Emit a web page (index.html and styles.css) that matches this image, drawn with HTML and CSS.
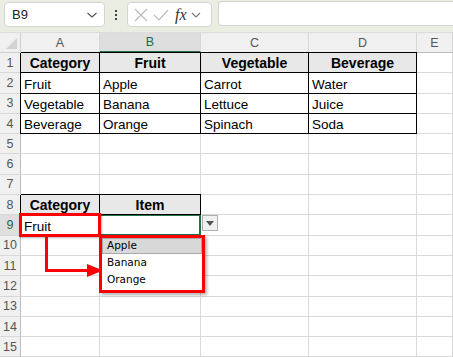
FILE: index.html
```html
<!DOCTYPE html>
<html>
<head>
<meta charset="utf-8">
<link rel="stylesheet" href="styles.css">
</head>
<body>
<div class="app">
  <div class="toolbar">
    <div class="namebox"><span class="ref">B9</span>
      <svg class="chev" width="12" height="8" viewBox="0 0 12 8"><path d="M1.5 2 L6 6 L10.5 2" fill="none" stroke="#555" stroke-width="1.2"/></svg>
    </div>
    <div class="dots"><i></i><i></i><i></i></div>
    <div class="fxbox">
      <svg width="16" height="16" viewBox="0 0 16 16"><path d="M2 2 L14 14 M14 2 L2 14" stroke="#bbb" stroke-width="1.2" fill="none"/></svg>
      <svg width="18" height="16" viewBox="0 0 18 16"><path d="M2 8 L7 13 L16 3" stroke="#bbb" stroke-width="1.2" fill="none"/></svg>
      <span class="fx">fx</span>
      <svg width="10" height="8" viewBox="0 0 10 8"><path d="M1 2 L5 6 L9 2" fill="none" stroke="#777" stroke-width="1.1"/></svg>
    </div>
    <div class="formula"></div>
  </div>
  <div class="sheet">
    <div class="grid">
      <div class="corner"></div><div class="ch">A</div><div class="ch sel">B</div><div class="ch">C</div><div class="ch">D</div><div class="ch">E</div>

      <div class="rh">1</div><div class="c t th">Category</div><div class="c t th">Fruit</div><div class="c t th">Vegetable</div><div class="c t th">Beverage</div><div class="c"></div>
      <div class="rh">2</div><div class="c t">Fruit</div><div class="c t">Apple</div><div class="c t">Carrot</div><div class="c t">Water</div><div class="c"></div>
      <div class="rh">3</div><div class="c t">Vegetable</div><div class="c t">Banana</div><div class="c t">Lettuce</div><div class="c t">Juice</div><div class="c"></div>
      <div class="rh">4</div><div class="c t">Beverage</div><div class="c t">Orange</div><div class="c t">Spinach</div><div class="c t">Soda</div><div class="c"></div>
      <div class="rh">5</div><div class="c"></div><div class="c"></div><div class="c"></div><div class="c"></div><div class="c"></div>
      <div class="rh">6</div><div class="c"></div><div class="c"></div><div class="c"></div><div class="c"></div><div class="c"></div>
      <div class="rh">7</div><div class="c"></div><div class="c"></div><div class="c"></div><div class="c"></div><div class="c"></div>
      <div class="rh">8</div><div class="c t th">Category</div><div class="c t th">Item</div><div class="c"></div><div class="c"></div><div class="c"></div>
      <div class="rh selr">9</div><div class="c t">Fruit</div><div class="c t active"></div><div class="c"></div><div class="c"></div><div class="c"></div>
      <div class="rh">10</div><div class="c"></div><div class="c"></div><div class="c"></div><div class="c"></div><div class="c"></div>
      <div class="rh">11</div><div class="c"></div><div class="c"></div><div class="c"></div><div class="c"></div><div class="c"></div>
      <div class="rh">12</div><div class="c"></div><div class="c"></div><div class="c"></div><div class="c"></div><div class="c"></div>
      <div class="rh">13</div><div class="c"></div><div class="c"></div><div class="c"></div><div class="c"></div><div class="c"></div>
      <div class="rh">14</div><div class="c"></div><div class="c"></div><div class="c"></div><div class="c"></div><div class="c"></div>
      <div class="rh">15</div><div class="c"></div><div class="c"></div><div class="c"></div><div class="c"></div><div class="c"></div>
    </div>

    <div class="ddbtn"><svg width="8" height="5" viewBox="0 0 8 5"><path d="M0 0 H8 L4 5 Z" fill="#555"/></svg></div>
    <div class="redbox"></div>
    <svg class="arrow" width="70" height="48" viewBox="0 0 70 48">
      <path d="M9.5 0 V34.5 H52" fill="none" stroke="#f00" stroke-width="3"/>
      <path d="M50 28 L66 34.5 L50 41 Z" fill="#f00"/>
    </svg>
    <div class="list">
      <div class="item hi">Apple</div>
      <div class="item">Banana</div>
      <div class="item">Orange</div>
    </div>
  </div>
</div>
</body>
</html>
```

FILE: styles.css
```css
* { box-sizing: border-box; }
html, body { margin: 0; padding: 0; background: #fff; }
body { width: 453px; height: 357px; overflow: hidden; font-family: "Liberation Sans", Arial, sans-serif; }
.app { width: 453px; height: 357px; overflow: hidden; }

.toolbar {
  height: 33px;
  background: #e9ede2;
  display: flex;
  align-items: flex-start;
  padding: 2px 0 0 4px;
  border-bottom: 1px solid #dcdcdc;
}
.namebox {
  width: 101px; height: 25px;
  background: #fff;
  border: 1px solid #d4d4d4;
  border-radius: 4px;
  display: flex; align-items: center; justify-content: space-between;
  padding: 0 6px 0 7px;
  font-size: 13px; color: #222;
}
.dots { width: 22px; height: 25px; display: flex; flex-direction: column; align-items: center; justify-content: center; gap: 2px; }
.dots i { display: block; width: 2px; height: 2px; background: #444; }
.fxbox {
  width: 85px; height: 25px;
  background: #fff;
  border: 1px solid #d4d4d4;
  border-radius: 4px;
  display: flex; align-items: center;
  padding: 0 3px 0 5px;
  gap: 3px;
}
.fx { font-family: "Liberation Serif", "DejaVu Serif", serif; font-style: italic; font-size: 16px; color: #333; margin-left: 2px; margin-right: 1px; }
.formula {
  margin-left: 6px;
  flex: 1; height: 25px;
  margin-top: -1px;
  background: #fff;
  border: 1px solid #d4d4d4;
  border-right: none;
  border-radius: 4px 0 0 4px;
}

.sheet { position: relative; }
.grid {
  display: grid;
  grid-template-columns: 21px 79px 101px 108px 108px 36px;
  grid-template-rows: 20px repeat(15, 20.3px);
  font-size: 13.5px;
}
.corner {
  background: #f0f0f0;
  border-right: 1px solid #cfcfcf;
  border-bottom: 1px solid #cfcfcf;
  position: relative;
}
.corner::after {
  content: ""; position: absolute; right: 3px; bottom: 3px;
  width: 0; height: 0;
  border-left: 11px solid transparent;
  border-bottom: 11px solid #d2d2d2;
}
.ch {
  background: #f0f0f0;
  border-right: 1px solid #d8d8d8;
  border-bottom: 1px solid #bdbdbd;
  color: #555;
  font-size: 12.5px;
  display: flex; align-items: center; justify-content: center;
}
.ch.sel { background: #dedede; color: #1d6a3f; border-bottom: 2px solid #217346; }
.rh {
  background: #f0f0f0;
  border-right: 1px solid #bdbdbd;
  border-bottom: 1px solid #d8d8d8;
  color: #555;
  font-size: 12.5px;
  display: flex; align-items: center; justify-content: center;
}
.rh.selr { color: #1d6a3f; background: #dedede; }
.c {
  border-right: 1px solid #d9d9d9;
  border-bottom: 1px solid #d9d9d9;
  display: flex; align-items: flex-end;
  padding: 0 3px 1px 3px;
  color: #000;
  white-space: nowrap;
  overflow: visible;
}
.c.t {
  border-right-color: #000;
  border-bottom-color: #000;
  box-shadow: -1px 0 0 #000, 0 -1px 0 #000;
}
.c.th { background: #e8e8e8; font-weight: bold; justify-content: center; font-size: 14px; }
.c.active { box-shadow: -1px 0 0 #000, 0 -1px 0 #000, inset 0 0 0 1px #217346; border-color: #217346; }

.ddbtn {
  position: absolute; left: 202px; top: 182px;
  width: 16px; height: 16px;
  background: #f0f0f0;
  border: 1px solid #b0b0b0;
  display: flex; align-items: center; justify-content: center;
}
.redbox {
  position: absolute; left: 19px; top: 180px;
  width: 82px; height: 24px;
  border: 3px solid #ff0000;
  box-shadow: 1px 1px 2px rgba(0,0,0,0.3);
}
.arrow { position: absolute; left: 37px; top: 203px; }
.list {
  position: absolute; left: 99px; top: 202px;
  width: 106px; height: 58px;
  border: 3px solid #ff0000;
  background: #fff;
  box-shadow: 2px 2px 3px rgba(0,0,0,0.3);
  font-family: "DejaVu Sans", Tahoma, sans-serif;
  font-size: 10.5px;
  color: #000;
}
.item { height: 17px; line-height: 16px; padding-left: 5px; }
.item.hi { background: #d8d8d8; border: 1px solid #a8a8a8; padding-left: 4px; height: 16px; line-height: 13px; }
```
